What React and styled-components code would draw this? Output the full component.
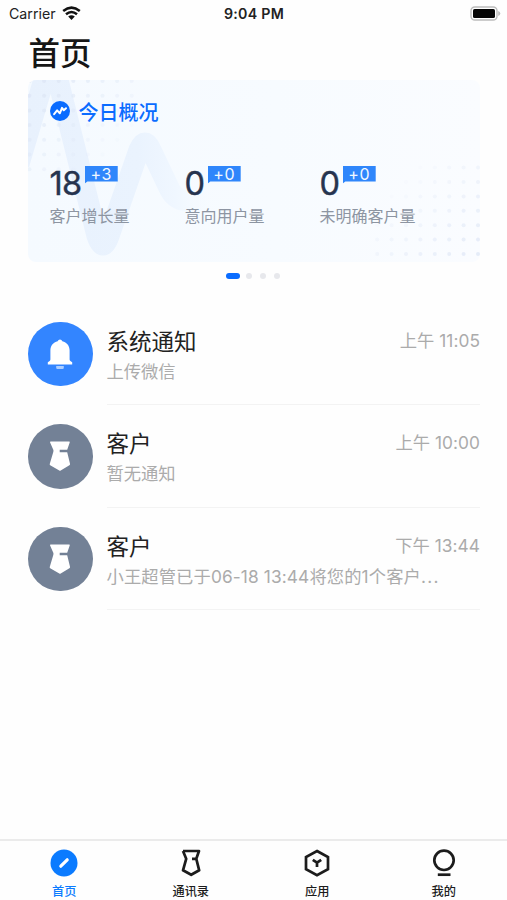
import React from 'react'
import styled, { createGlobalStyle } from 'styled-components'

const GlobalStyle = createGlobalStyle`
  * {
    box-sizing: border-box;
  }
  body {
    margin: 0;
    background-color: #fefefe;
    font-family: Inter, 'Noto Sans CJK SC', sans-serif;
  }
`
const Page = styled.div`
  display: flex;
  flex-direction: column;
  height: 100vh;
  overflow: hidden;
  background-color: #fefefe;
`
const StatusBar = styled.header`
  display: grid;
  grid-template-columns: 1fr auto 1fr;
  align-items: center;
  height: 27px;
  padding: 0 6px 0 9px;
  color: #222222;
`
const Carrier = styled.div`
  display: flex;
  align-items: center;
  gap: 6px;
  font-size: 14.2px;
  line-height: 27px;
`
const Clock = styled.div`
  margin-right: 2px;
  font-size: 14.2px;
  font-weight: 600;
  letter-spacing: 0.25px;
`
const Battery = styled.div`
  display: flex;
  justify-content: flex-end;
`
const PageTitle = styled.h1`
  margin: 0;
  padding-left: 28.5px;
  height: 53px;
  font-size: 31.5px;
  font-weight: 500;
  line-height: 53px;
  color: #161616;
`
const Card = styled.section`
  position: relative;
  height: 182px;
  margin: 0 27px 0 28px;
  padding: 19px 22px 0 21.5px;
  border-radius: 8px;
  overflow: hidden;
  background: linear-gradient(90deg, #f5faff 0%, #f7fbff 55%, #fafcff 100%);
`
const Artwork = styled.svg`
  position: absolute;
  top: 0;
  left: 0;
`
const CardHead = styled.div`
  position: relative;
  display: flex;
  align-items: center;
  gap: 9px;
  height: 26px;
  font-size: 20px;
  font-weight: 500;
  line-height: 26px;
  color: #0a6cff;
  svg {
    margin-top: -2px;
  }
  span {
    margin-top: 2px;
  }
`
const Stats = styled.div`
  position: relative;
  display: grid;
  grid-template-columns: repeat(3, 135px);
  margin-top: 38px;
`
const StatTop = styled.div`
  display: flex;
  align-items: flex-start;
  gap: 3.5px;
  height: 41px;
`
const StatValue = styled.span`
  font-size: 32.5px;
  line-height: 41px;
  letter-spacing: -0.8px;
  color: #26344f;
  -webkit-text-stroke: 0.4px #26344f;
`
const Delta = styled.span`
  width: 33px;
  height: 18px;
  margin-top: 2.5px;
  background-color: #2f86fb;
  clip-path: polygon(0 0, 100% 0, 100% 89%, 8% 89%, 0 100%);
  font-size: 16px;
  line-height: 17px;
  letter-spacing: 0.7px;
  text-align: center;
  color: #f2f8ff;
`
const StatLabel = styled.div`
  font-size: 16px;
  line-height: 24px;
  white-space: nowrap;
  color: #8d95a2;
`
const Pager = styled.div`
  display: flex;
  justify-content: center;
  align-items: center;
  gap: 8px;
  height: 28px;
  padding-right: 2px;
`
const Dot = styled.span`
  width: ${(props) => (props.$active ? '14px' : '6px')};
  height: 6px;
  margin-right: ${(props) => (props.$active ? '-2px' : '0')};
  border-radius: 3px;
  background-color: ${(props) => (props.$active ? '#0a6cff' : '#e7e8ec')};
`
const List = styled.main`
  flex: 1;
  padding: 12.5px 27px 0 28px;
`
const Row = styled.div`
  display: flex;
  height: 102.6px;
`
const Avatar = styled.div`
  display: flex;
  align-items: center;
  justify-content: center;
  flex: none;
  width: 64.5px;
  height: 64.5px;
  margin: 19px 14px 0 0;
  border-radius: 50%;
  background-color: ${(props) => props.$color};
`
const RowBody = styled.div`
  flex: 1;
  min-width: 0;
  padding-top: 21px;
  border-bottom: 1.5px solid #f3f3f3;
`
const RowHead = styled.div`
  display: flex;
  justify-content: space-between;
  height: 33px;
  line-height: 34px;
`
const RowTitle = styled.span`
  padding-top: 1px;
  font-size: 22.5px;
  color: #222222;
`
const RowTime = styled.span`
  font-size: 17.3px;
  letter-spacing: 0.05px;
  color: #ababab;
`
const RowText = styled.div`
  margin-top: 1px;
  font-size: 17.3px;
  line-height: 27px;
  letter-spacing: ${(props) => (props.$wide ? '0.12px' : '0')};
  white-space: nowrap;
  color: #ababab;
`
const Ellipsis = styled.span`
  letter-spacing: 1.3px;
`
const TabBar = styled.nav`
  display: grid;
  grid-template-columns: repeat(4, 1fr);
  height: 61px;
  padding-left: 1px;
  border-top: 2px solid #ebebeb;
`
const Tab = styled.div`
  display: flex;
  flex-direction: column;
  align-items: center;
  padding-top: 8px;
  font-size: 12.2px;
  font-weight: 500;
  line-height: 18px;
  color: ${(props) => (props.$active ? '#0b7bff' : '#1c1c1c')};
`
const TabIcon = styled.svg`
  width: 28px;
  height: 28px;
  margin-bottom: 6px;
  fill: none;
  stroke: currentColor;
  stroke-width: 2.7;
`

const WifiIcon = () => (
  <svg width="19" height="15" viewBox="0 0 19 15" fill="none">
    <path
      d="M1.2 5 Q9.5 -1.8 17.8 5 M4 8.3 Q9.5 3.7 15 8.3"
      stroke="#111"
      strokeWidth="2.5"
    />
    <path d="M6.2 10.6 Q9.5 8.1 12.8 10.6 L9.5 14 Z" fill="#111" />
  </svg>
)

const BatteryIcon = () => (
  <svg width="31" height="15" viewBox="0 0 31 15">
    <rect x="1" y="1" width="26" height="13" rx="3.8" fill="#fff" stroke="#bcbcbc" strokeWidth="1.4" />
    <rect x="3" y="2.9" width="22" height="9.2" rx="1.6" fill="#050505" />
    <path d="M28.2 5 Q30.3 5.8 30.3 7.5 Q30.3 9.2 28.2 10 Z" fill="#bcbcbc" />
  </svg>
)

const TrendIcon = () => (
  <svg width="20" height="20" viewBox="0 0 20 20" fill="none">
    <circle cx="10" cy="10" r="10" fill="#0a6cff" />
    <path
      d="M4.1 13.2 L7.1 9.4 L9.8 12.3 L12 6.9 L13.8 9.3 L16 7.2"
      stroke="#fff"
      strokeWidth="2"
      strokeLinecap="round"
      strokeLinejoin="round"
    />
  </svg>
)

const BellIcon = () => (
  <svg width="26" height="32" viewBox="0 0 26 32" fill="#fff">
    <path d="M13 1.5 C14.1 1.5 14.7 2.3 15.3 3.3 C19.9 4.5 22.6 8 22.6 12.3 V21.5 Q22.6 22.6 23.7 23.2 L25.2 24.2 V26.5 H0.8 V24.2 L2.3 23.2 Q3.4 22.6 3.4 21.5 V12.3 C3.4 8 6.1 4.5 10.7 3.3 C11.3 2.3 11.9 1.5 13 1.5 Z" />
    <path d="M9.2 28 H16.8 V29.8 Q16.8 31 15.6 31 H10.4 Q9.2 31 9.2 29.8 Z" fillOpacity="0.6" />
  </svg>
)

const TieIcon = () => (
  <svg width="22" height="32" viewBox="0 0 22 32">
    <path
      d="M1.8 1.5 H20.2 Q21 1.5 20.7 2.6 L18.2 9.8 H10.7 V12.3 H18.2 L21 23.8 Q21.2 24.8 20.4 25.3 L11.7 30.6 Q11 31 10.3 30.6 L1.2 25.3 Q0.5 24.8 0.8 23.8 L4.3 12 Q4.7 10.8 4.3 9.8 L1.1 2.6 Q0.7 1.5 1.8 1.5 Z"
      fill="#fff"
    />
  </svg>
)

// dot grid fading away from one corner of the card
const dots = []
for (let row = 0; row < 7; row++) {
  for (let col = 0; col < 8; col++) {
    const fade = 1 - (row + col) / 11
    dots.push({ x: 1.5 + col * 14.6, y: 1 + row * 14.7, opacity: fade * 0.8 })
    dots.push({ x: 450 - col * 14.4, y: 174 - row * 14.4, opacity: fade * 0.7 })
  }
}

const CardArtwork = () => (
  <Artwork width="452" height="182" viewBox="0 0 452 182" fill="none">
    <defs>
      <linearGradient id="pulse" gradientUnits="userSpaceOnUse" x1="0" y1="0" x2="190" y2="0">
        <stop offset="0" stopColor="#e8f1fd" />
        <stop offset="0.58" stopColor="#eaf3fe" />
        <stop offset="0.78" stopColor="#f0f7ff" />
        <stop offset="1" stopColor="#f6fbff" stopOpacity="0" />
      </linearGradient>
    </defs>
    <path
      d="M-9 84 L17 -4 Q23 -14 29 -4 L69 156 Q75 174 81 156 L111 70 Q117 56 123 70 L142 110 Q148 121 162 121 L200 122"
      stroke="url(#pulse)"
      strokeWidth="21"
      strokeLinejoin="round"
    />
    {dots.map((dot) => (
      <circle
        key={`${dot.x}-${dot.y}`}
        cx={dot.x}
        cy={dot.y}
        r="2"
        fill="#dce5f5"
        opacity={Math.max(dot.opacity, 0)}
      />
    ))}
  </Artwork>
)

const stats = [
  { value: '18', delta: '+3', label: '客户增长量' },
  { value: '0', delta: '+0', label: '意向用户量' },
  { value: '0', delta: '+0', label: '未明确客户量' },
]

const messages = [
  {
    title: '系统通知',
    text: '上传微信',
    time: '上午 11:05',
    color: '#3385ff',
    icon: <BellIcon />,
  },
  {
    title: '客户',
    text: '暂无通知',
    time: '上午 10:00',
    color: '#738196',
    icon: <TieIcon />,
  },
  {
    title: '客户',
    text: '小王超管已于06-18 13:44将您的1个客户',
    time: '下午 13:44',
    color: '#738196',
    icon: <TieIcon />,
    cut: true,
  },
]

const tabs = [
  {
    name: '首页',
    active: true,
    icon: (
      <>
        <circle cx="14" cy="14" r="13.5" fill="currentColor" stroke="none" />
        <path d="M10.8 17.2 L17.2 10.8" stroke="#fff" strokeWidth="3.2" strokeLinecap="round" />
      </>
    ),
  },
  {
    name: '通讯录',
    icon: (
      <path
        d="M6 2 H22 L19.3 9.8 L22.2 21.3 L14.2 25.8 L6 21.3 L9.2 9.8 L6 2 M15 9.8 H19.3"
        strokeLinejoin="round"
      />
    ),
  },
  {
    name: '应用',
    icon: (
      <>
        <path d="M14 2 L25 8 V20.3 L14 26.2 L3 20.3 V8 Z" />
        <path d="M9.8 10.8 L14 13.7 L18.2 10.8 M14 13.7 V18" />
      </>
    ),
  },
  {
    name: '我的',
    icon: (
      <>
        <circle cx="14" cy="11.3" r="9.7" />
        <path d="M7.8 25.7 H20.5" />
      </>
    ),
  },
]

const App = () => {
  return (
    <>
      <GlobalStyle />
      <Page>
        <StatusBar>
          <Carrier>
            Carrier
            <WifiIcon />
          </Carrier>
          <Clock>9:04 PM</Clock>
          <Battery>
            <BatteryIcon />
          </Battery>
        </StatusBar>
        <PageTitle>首页</PageTitle>
        <Card>
          <CardArtwork />
          <CardHead>
            <TrendIcon />
            <span>今日概况</span>
          </CardHead>
          <Stats>
            {stats.map((stat) => (
              <div key={stat.label}>
                <StatTop>
                  <StatValue>{stat.value}</StatValue>
                  <Delta>{stat.delta}</Delta>
                </StatTop>
                <StatLabel>{stat.label}</StatLabel>
              </div>
            ))}
          </Stats>
        </Card>
        <Pager>
          <Dot $active />
          <Dot />
          <Dot />
          <Dot />
        </Pager>
        <List>
          {messages.map((message) => (
            <Row key={message.time}>
              <Avatar $color={message.color}>{message.icon}</Avatar>
              <RowBody>
                <RowHead>
                  <RowTitle>{message.title}</RowTitle>
                  <RowTime>{message.time}</RowTime>
                </RowHead>
                <RowText $wide={message.cut}>
                  {message.text}
                  {message.cut && <Ellipsis>...</Ellipsis>}
                </RowText>
              </RowBody>
            </Row>
          ))}
        </List>
        <TabBar>
          {tabs.map((tab) => (
            <Tab key={tab.name} $active={tab.active}>
              <TabIcon viewBox="0 0 28 28">{tab.icon}</TabIcon>
              {tab.name}
            </Tab>
          ))}
        </TabBar>
      </Page>
    </>
  )
}

export default App
